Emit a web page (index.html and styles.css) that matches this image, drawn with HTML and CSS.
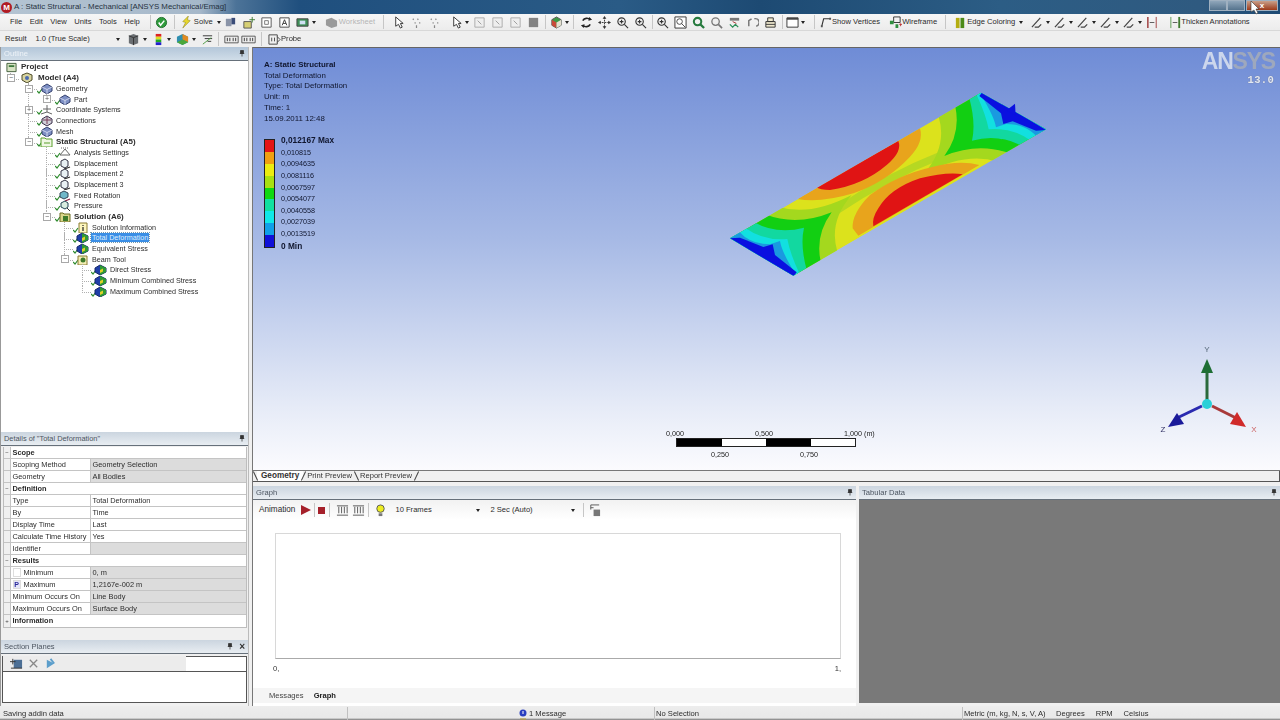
FILE: index.html
```html
<!DOCTYPE html>
<html lang="en">
<head>
<meta charset="utf-8">
<title>A : Static Structural - Mechanical [ANSYS Mechanical/Emag]</title>
<link rel="stylesheet" href="styles.css">
</head>
<body>
<svg class="sprite" xmlns="http://www.w3.org/2000/svg">
  <symbol id="chk" viewBox="0 0 16 11"><path d="M0 8l2 2 3-4" fill="none" stroke="#2e8b2e" stroke-width="1.2"/></symbol>
  <symbol id="cube" viewBox="0 0 16 11"><path d="M5 4l5-3 5 3v4l-5 3-5-3z" fill="#7d8fc4" stroke="#34406e"/><path d="M5 4l5 2.500 5-2.500M10 6.500V11" fill="none" stroke="#dfe4f5" stroke-width=".8"/></symbol>
  <symbol id="conn" viewBox="0 0 16 11"><path d="M5 4l5-3 5 3v4l-5 3-5-3z" fill="#cfcfd8" stroke="#3b2f4a"/><path d="M10 2v7M6 5h8" stroke="#7a3f5a"/></symbol>
  <symbol id="axes" viewBox="0 0 16 11"><path d="M10 1v7M10 8l-6 2M10 8l5 2M6 5h8" stroke="#666" fill="none"/></symbol>
  <symbol id="green" viewBox="0 0 16 11"><path d="M4 2h4l1 1h6v8H4z" fill="#f0f7e4" stroke="#5aa02c"/><path d="M7 7h6" stroke="#5aa02c"/></symbol>
  <symbol id="wire" viewBox="0 0 16 11"><path d="M5 8l5-6 5 6z" fill="#fff" stroke="#666"/><path d="M6 1h8" stroke="#666" stroke-dasharray="1 1"/></symbol>
  <symbol id="disp" viewBox="0 0 16 11"><path d="M6 3l4-2 3 2v5l-3 2-4-2z" fill="#e8f0f4" stroke="#334"/><path d="M9 11l6-2" stroke="#333" stroke-width="1.300"/></symbol>
  <symbol id="fixed" viewBox="0 0 16 11"><path d="M5 3l4-2 4 2v4l-4 2-4-2z" fill="#6fb7c8" stroke="#345"/><path d="M10 11l5-2" stroke="#8a2040" stroke-width="1.300"/></symbol>
  <symbol id="press" viewBox="0 0 16 11"><path d="M6 3l4-2 3 2v4l-3 2-4-2z" fill="#d8ece0" stroke="#245"/><path d="M12 8l3 3" stroke="#333"/></symbol>
  <symbol id="sol" viewBox="0 0 16 11"><path d="M5 2h3l1 1h6v8H5z" fill="#d9d68a" stroke="#6b6a20"/><path d="M8 5h5v5H8z" fill="#3e7a2a"/></symbol>
  <symbol id="info" viewBox="0 0 16 11"><path d="M6 1h8v10H6z" fill="#fdf6bd" stroke="#8a7a30"/><path d="M10 3v1M10 5v4" stroke="#222" stroke-width="1.200"/></symbol>
  <symbol id="beam" viewBox="0 0 16 11"><path d="M5 2h9v9H5z" fill="#f3eeb4" stroke="#8a7a30"/><circle cx="10" cy="6" r="2.500" fill="#3e7a2a"/></symbol>
  <symbol id="res" viewBox="0 0 16 11"><path d="M4 4l5-3 6 3v4l-6 3-5-3z" fill="#1f3fa8" stroke="#16286a"/><path d="M9 1l6 3v4l-6 3z" fill="#2f9a34"/><path d="M9 6l3-1.500v3L9 9z" fill="#e0d02a"/></symbol>
  <symbol id="proj" viewBox="0 0 12 11"><path d="M1 1h10v9H1z" fill="#d7e3c3" stroke="#3c5a34"/><path d="M3 3h6v2H3z" fill="#3c7a3c"/></symbol>
  <symbol id="model" viewBox="0 0 12 11"><path d="M1 3l5-2 5 2v5l-5 3-5-3z" fill="#d8d4a0" stroke="#4c4a28"/><circle cx="6" cy="6" r="2" fill="#4a6ab0"/></symbol>
  <symbol id="ok" viewBox="0 0 14 14"><circle cx="7" cy="7" r="5.500" fill="#2f9b3c" stroke="#1f6e2a"/><path d="M4 7l2 3 4-5" fill="none" stroke="#fff" stroke-width="1.600"/></symbol>
  <symbol id="bolt" viewBox="0 0 14 14"><path d="M9 0L3 6l3 1-3 6 8-8-3-1z" fill="#e7d72d" stroke="#8e8420" stroke-width=".6"/></symbol>
  <symbol id="boxes" viewBox="0 0 14 14"><path d="M2 3h6v8H2z" fill="#8a94a8"/><path d="M8 2h4v7H8z" fill="#3a4c78"/></symbol>
  <symbol id="starbox" viewBox="0 0 14 14"><path d="M2 6h8v7H2z" fill="#d6cf74" stroke="#555"/><path d="M11 1v6M8 4h6" stroke="#3a7a30"/></symbol>
  <symbol id="page" viewBox="0 0 14 14"><path d="M2 2h10v10H2z" fill="#fff" stroke="#555"/><path d="M5 5h4v4H5z" fill="none" stroke="#777"/></symbol>
  <symbol id="pagea" viewBox="0 0 14 14"><path d="M2 2h10v10H2z" fill="#fff" stroke="#444"/><path d="M4.500 10L7 4l2.500 6M5.500 8h3" fill="none" stroke="#333"/></symbol>
  <symbol id="globe" viewBox="0 0 14 14"><path d="M1 3h12v8H1z" fill="#3f8f57" stroke="#444"/><path d="M4 5h6v4H4z" fill="#cfe0f2"/></symbol>
  <symbol id="ws" viewBox="0 0 14 14"><path d="M1 4l6-2 6 3v6l-6 2-6-3z" fill="#9a9a9a"/></symbol>
  <symbol id="cursor" viewBox="0 0 14 14"><path d="M4 1v10l3-2 2 4 2-1-2-4h3z" fill="#fff" stroke="#333"/></symbol>
  <symbol id="pick" viewBox="0 0 14 14"><path d="M3 3l1 1M8 3l1 1M5 7l1 1M10 7l1 1M7 10v3" stroke="#888" stroke-width="1.300"/></symbol>
  <symbol id="fpage" viewBox="0 0 14 14"><path d="M2 2h10v10H2z" fill="#eee" stroke="#aaa"/><path d="M5 5l4 4" stroke="#999"/></symbol>
  <symbol id="gbox" viewBox="0 0 14 14"><path d="M2 2h10v10H2z" fill="#666" opacity=".8"/></symbol>
  <symbol id="gcube" viewBox="0 0 14 14"><path d="M2 4l5-3 5 3v6l-5 3-5-3z" fill="#3f9b46" stroke="#555"/><path d="M2 4l5 3v6l-5-3z" fill="#c94a3a"/><path d="M7 7l5-3v6l-5 3z" fill="#e5dfd0"/></symbol>
  <symbol id="rot" viewBox="0 0 14 14"><path d="M11 4A5 5 0 0 0 3 5M3 10a5 5 0 0 0 8-1" fill="none" stroke="#222" stroke-width="1.800"/><path d="M10 1l3 3-4 1zM4 13l-3-3 4-1z" fill="#222"/></symbol>
  <symbol id="pan" viewBox="0 0 14 14"><path d="M7 1v12M1 7h12" stroke="#333" stroke-dasharray="2 1"/><path d="M7 0l2 3H5zM7 14l2-3H5zM0 7l3-2v4zM14 7l-3-2v4z" fill="#333"/></symbol>
  <symbol id="zoom" viewBox="0 0 14 14"><circle cx="6" cy="6" r="4" fill="#f2f2f2" stroke="#333" stroke-width="1.200"/><path d="M9 9l4 4M4 6h4M6 4v4" stroke="#333" stroke-width="1.200"/></symbol>
  <symbol id="zoomb" viewBox="0 0 14 14"><path d="M1 1h12v12H1z" fill="#fff" stroke="#333"/><circle cx="6" cy="6" r="3" fill="none" stroke="#444"/><path d="M8 8l4 4" stroke="#444"/></symbol>
  <symbol id="zoomg" viewBox="0 0 14 14"><circle cx="6" cy="6" r="4" fill="none" stroke="#267a3e" stroke-width="2.200"/><path d="M9 9l4 4" stroke="#267a3e" stroke-width="2.400"/></symbol>
  <symbol id="zoomn" viewBox="0 0 14 14"><circle cx="6" cy="6" r="4" fill="#eee" stroke="#777" stroke-width="1.400"/><path d="M9 9l4 4" stroke="#777" stroke-width="1.800"/></symbol>
  <symbol id="three60" viewBox="0 0 14 14"><path d="M2 2h10v3H2z" fill="#444" opacity=".7"/><path d="M2 9l3 3 3-3 3 3" fill="none" stroke="#2f8f5a" stroke-width="1.400"/><path d="M5 6l4 2" stroke="#a33"/></symbol>
  <symbol id="hand" viewBox="0 0 14 14"><path d="M3 11V5l3-2M9 3a4 4 0 0 1 2 8" fill="none" stroke="#777" stroke-width="1.600"/></symbol>
  <symbol id="print" viewBox="0 0 14 14"><path d="M4 2h6v4H4zM2 6h10v6H2z" fill="#efe9cf" stroke="#333"/><path d="M2 9h10" stroke="#333"/></symbol>
  <symbol id="frame" viewBox="0 0 14 14"><path d="M1 2h12v10H1z" fill="#fff" stroke="#333"/><path d="M1 2h12v2H1z" fill="#444"/></symbol>
  <symbol id="vert" viewBox="0 0 14 14"><path d="M3 11l2-8h7" fill="none" stroke="#333" stroke-width="1.200"/><path d="M2 10h2v2H2zM11 2h2v2h-2z" fill="#555"/></symbol>
  <symbol id="wfr" viewBox="0 0 14 14"><path d="M5 1h7v6H5z" fill="none" stroke="#333"/><path d="M1 5h4v4H1zM7 9h3v4H7z" fill="#2f8f3f"/><path d="M11 9h3M12.500 8v3" stroke="#b33"/></symbol>
  <symbol id="bars" viewBox="0 0 14 14"><path d="M2 2h4v11H2z" fill="#b4ad10"/><path d="M7 2h4v11H7z" fill="#4b8a18"/></symbol>
  <symbol id="edge" viewBox="0 0 14 14"><path d="M1 12L10 2M4 12h4l3-3" fill="none" stroke="#444" stroke-width="1.300"/></symbol>
  <symbol id="thinl" viewBox="0 0 14 14"><path d="M2 1v12" stroke="#a04040" stroke-width="1.600"/><path d="M11 1v12" stroke="#a04040"/><path d="M4 7h5" stroke="#555"/></symbol>
  <symbol id="thinr" viewBox="0 0 14 14"><path d="M2 1v12" stroke="#5a9a50"/><path d="M11 1v12" stroke="#3f7a30" stroke-width="2"/><path d="M4 7h5" stroke="#555"/></symbol>
  <symbol id="cube3" viewBox="0 0 14 14"><path d="M2 3l5-2 5 2v8l-5 2-5-2z" fill="#6a6e72"/><path d="M7 5v8" stroke="#333"/><path d="M2 3l5 2 5-2" fill="none" stroke="#333"/></symbol>
  <symbol id="rain" viewBox="0 0 14 14"><path d="M4 1h6v3H4z" fill="#d22"/><path d="M4 4h6v3H4z" fill="#dd2"/><path d="M4 7h6v3H4z" fill="#2a2"/><path d="M4 10h6v3H4z" fill="#22c"/></symbol>
  <symbol id="ball" viewBox="0 0 14 14"><path d="M1 4l6-3 6 3v6l-6 3-6-3z" fill="#2f8fb0"/><path d="M7 1l6 3v6L7 7z" fill="#e08a20"/><path d="M1 10l6-3 6 3-6 3z" fill="#4aa83a"/></symbol>
  <symbol id="filter" viewBox="0 0 14 14"><path d="M2 3h10M4 6h8M7 9h4" stroke="#333"/><path d="M2 12L11 5" stroke="#4a9a40"/></symbol>
  <symbol id="pill" viewBox="0 0 18 14"><path d="M1 3h16v8H1z" fill="#eee" stroke="#444"/><path d="M4 5v4M7 5v4M11 5v4M14 5v4" stroke="#222"/></symbol>
  <symbol id="probe" viewBox="0 0 14 14"><path d="M1 2h9v10H1z" fill="none" stroke="#444"/><path d="M4 5v4M7 5v4" stroke="#444"/><path d="M10 4l3 3-3 3" fill="none" stroke="#444"/></symbol>
  <symbol id="pin" viewBox="0 0 8 8"><path d="M2 0h4v4H2zM1 4h6M4 4v4" fill="#333" stroke="#333"/></symbol>
  <symbol id="bulb" viewBox="0 0 12 14"><circle cx="6" cy="5" r="4" fill="#eded20" stroke="#555"/><path d="M4 10h4v3H4z" fill="#777"/></symbol>
  <symbol id="frames" viewBox="0 0 14 14"><path d="M3 3v7M6 3v7M9 3v7M12 3v7" stroke="#555"/><path d="M1 12h12M1 2h12" stroke="#555"/></symbol>
  <symbol id="exportg" viewBox="0 0 14 14"><path d="M3 1h9M3 1v5M3 4h3" stroke="#555" fill="none"/><path d="M6 6h7v7H6z" fill="#777"/></symbol>
  <symbol id="newp" viewBox="0 0 14 14"><path d="M4 3h9v9H4z" fill="#4c6f95"/><path d="M0 5h6M3 2v6M1 12h12" stroke="#333"/></symbol>
  <symbol id="cross" viewBox="0 0 14 14"><path d="M3 3l8 8M11 3l-8 8" stroke="#888" stroke-width="1.400"/></symbol>
  <symbol id="del" viewBox="0 0 14 14"><path d="M3 3l8 4-8 5z" fill="#5c9ecb"/><path d="M7 2l4 5" stroke="#5c9ecb" stroke-width="2"/></symbol>
</svg>

<div class="app">
  <header class="titlebar">
    <span class="logo">M</span>
    <span class="title">A : Static Structural - Mechanical [ANSYS Mechanical/Emag]</span>
    <span class="winbtns"><span class="wb"></span><span class="wb"></span><span class="wb close">x</span></span>
    <svg class="pointer" viewBox="0 0 10 14"><path d="M1 0v11l3-2 2 4 2-1-2-4h3z" fill="#fff" stroke="#333" stroke-width=".6"/></svg>
  </header>

  <div class="tb tb1">
    <nav class="menu"><span>File</span><span>Edit</span><span>View</span><span>Units</span><span>Tools</span><span>Help</span></nav>
    <i class="sep s1"></i>
    <span class="c16"><svg class="ic"><use href="#ok"/></svg></span>
    <i class="sep s2"></i>
    <span class="c14"><svg class="ic"><use href="#bolt"/></svg></span><span class="lbl">Solve</span>
    <b class="dd d1"></b>
    <span class="c18 after-dd"><svg class="ic"><use href="#boxes"/></svg></span>
    <span class="c18"><svg class="ic"><use href="#starbox"/></svg></span>
    <span class="c18"><svg class="ic"><use href="#page"/></svg></span>
    <span class="c18"><svg class="ic"><use href="#pagea"/></svg></span>
    <span class="c18"><svg class="ic"><use href="#globe"/></svg></span><b class="dd d0"></b>
    <span class="c14 ws"><svg class="ic"><use href="#ws"/></svg></span><span class="lbl dim">Worksheet</span>
    <i class="sep s3"></i>
    <span class="c18"><svg class="ic"><use href="#cursor"/></svg></span>
    <span class="c18"><svg class="ic"><use href="#pick"/></svg></span>
    <span class="c18"><svg class="ic"><use href="#pick"/></svg></span>
    <span class="c18 m2"><svg class="ic"><use href="#cursor"/></svg></span><b class="dd d0"></b>
    <span class="c18 m0"><svg class="ic"><use href="#fpage"/></svg></span>
    <span class="c18"><svg class="ic"><use href="#fpage"/></svg></span>
    <span class="c18"><svg class="ic"><use href="#fpage"/></svg></span>
    <span class="c18"><svg class="ic"><use href="#gbox"/></svg></span>
    <i class="sep s4"></i>
    <span class="c18"><svg class="ic"><use href="#gcube"/></svg></span><b class="dd d0"></b>
    <i class="sep s5"></i>
    <span class="c18"><svg class="ic"><use href="#rot"/></svg></span>
    <span class="c18"><svg class="ic"><use href="#pan"/></svg></span>
    <span class="c18"><svg class="ic"><use href="#zoom"/></svg></span>
    <span class="c18"><svg class="ic"><use href="#zoom"/></svg></span>
    <i class="sep s6"></i>
    <span class="c18"><svg class="ic"><use href="#zoom"/></svg></span>
    <span class="c18"><svg class="ic"><use href="#zoomb"/></svg></span>
    <span class="c18"><svg class="ic"><use href="#zoomg"/></svg></span>
    <span class="c18"><svg class="ic"><use href="#zoomn"/></svg></span>
    <span class="c18"><svg class="ic"><use href="#three60"/></svg></span>
    <span class="c18"><svg class="ic"><use href="#hand"/></svg></span>
    <span class="c18"><svg class="ic"><use href="#print"/></svg></span>
    <i class="sep s7"></i>
    <span class="c18"><svg class="ic"><use href="#frame"/></svg></span><b class="dd d0"></b>
    <i class="sep s8"></i>
    <span class="c14"><svg class="ic"><use href="#vert"/></svg></span><span class="lbl">Show Vertices</span>
    <span class="c14 m7"><svg class="ic"><use href="#wfr"/></svg></span><span class="lbl">Wireframe</span>
    <i class="sep s9"></i>
    <span class="c14"><svg class="ic"><use href="#bars"/></svg></span><span class="lbl">Edge Coloring</span><b class="dd d1"></b>
    <span class="c18 e1"><svg class="ic"><use href="#edge"/></svg></span><b class="dd d0"></b>
    <span class="c18 e2"><svg class="ic"><use href="#edge"/></svg></span><b class="dd d0"></b>
    <span class="c18 e2"><svg class="ic"><use href="#edge"/></svg></span><b class="dd d0"></b>
    <span class="c18 e2"><svg class="ic"><use href="#edge"/></svg></span><b class="dd d0"></b>
    <span class="c18 e2"><svg class="ic"><use href="#edge"/></svg></span><b class="dd d0"></b>
    <span class="c18 e3"><svg class="ic"><use href="#thinl"/></svg></span>
    <span class="c18 e4"><svg class="ic"><use href="#thinr"/></svg></span><span class="lbl thick">Thicken Annotations</span>
  </div>

  <div class="tb tb2">
    <span class="lbl res">Result</span>
    <span class="scale">1.0 (True Scale)</span><b class="dd d1"></b>
    <span class="c18 sc"><svg class="ic"><use href="#cube3"/></svg></span><b class="dd d0"></b>
    <span class="c18 sc2"><svg class="ic"><use href="#rain"/></svg></span><b class="dd d0"></b>
    <span class="c18 sc2"><svg class="ic"><use href="#ball"/></svg></span><b class="dd d0"></b>
    <span class="c18 sc2"><svg class="ic"><use href="#filter"/></svg></span>
    <i class="sep s10"></i>
    <svg class="ic pl"><use href="#pill"/></svg><svg class="ic pl"><use href="#pill"/></svg>
    <i class="sep s11"></i>
    <span class="c14"><svg class="ic"><use href="#probe"/></svg></span><span class="lbl">Probe</span>
  </div>

  <main class="main">
    <aside class="left">
      <section class="outline">
        <div class="phead faint">Outline<svg class="pin"><use href="#pin"/></svg></div>
        <ul class="tree">
          <li class="root"><div class="row"><svg class="ti small"><use href="#proj"/></svg><span class="bold">Project</span></div>
            <ul>
              <li><div class="row"><span class="exp">&minus;</span><svg class="ti"><use href="#model"/></svg><span class="bold">Model (A4)</span></div>
                <ul>
                  <li><div class="row"><span class="exp">&minus;</span><svg class="ti"><use href="#chk"/><use href="#cube"/></svg><span>Geometry</span></div>
                    <ul><li><div class="row"><span class="exp">+</span><svg class="ti"><use href="#chk"/><use href="#cube"/></svg><span>Part</span></div></li></ul>
                  </li>
                  <li><div class="row"><span class="exp">+</span><svg class="ti"><use href="#chk"/><use href="#axes"/></svg><span>Coordinate Systems</span></div></li>
                  <li><div class="row"><svg class="ti"><use href="#chk"/><use href="#conn"/></svg><span>Connections</span></div></li>
                  <li><div class="row"><svg class="ti"><use href="#chk"/><use href="#cube"/></svg><span>Mesh</span></div></li>
                  <li><div class="row"><span class="exp">&minus;</span><svg class="ti"><use href="#chk"/><use href="#green"/></svg><span class="bold">Static Structural (A5)</span></div>
                    <ul>
                      <li><div class="row"><svg class="ti"><use href="#chk"/><use href="#wire"/></svg><span>Analysis Settings</span></div></li>
                      <li><div class="row"><svg class="ti"><use href="#chk"/><use href="#disp"/></svg><span>Displacement</span></div></li>
                      <li><div class="row"><svg class="ti"><use href="#chk"/><use href="#disp"/></svg><span>Displacement 2</span></div></li>
                      <li><div class="row"><svg class="ti"><use href="#chk"/><use href="#disp"/></svg><span>Displacement 3</span></div></li>
                      <li><div class="row"><svg class="ti"><use href="#chk"/><use href="#fixed"/></svg><span>Fixed Rotation</span></div></li>
                      <li><div class="row"><svg class="ti"><use href="#chk"/><use href="#press"/></svg><span>Pressure</span></div></li>
                      <li><div class="row"><span class="exp">&minus;</span><svg class="ti"><use href="#chk"/><use href="#sol"/></svg><span class="bold">Solution (A6)</span></div>
                        <ul>
                          <li><div class="row"><svg class="ti"><use href="#chk"/><use href="#info"/></svg><span>Solution Information</span></div></li>
                          <li><div class="row"><svg class="ti"><use href="#chk"/><use href="#res"/></svg><span class="sel">Total Deformation</span></div></li>
                          <li><div class="row"><svg class="ti"><use href="#chk"/><use href="#res"/></svg><span>Equivalent Stress</span></div></li>
                          <li><div class="row"><span class="exp">&minus;</span><svg class="ti"><use href="#chk"/><use href="#beam"/></svg><span>Beam Tool</span></div>
                            <ul>
                              <li><div class="row"><svg class="ti"><use href="#chk"/><use href="#res"/></svg><span>Direct Stress</span></div></li>
                              <li><div class="row"><svg class="ti"><use href="#chk"/><use href="#res"/></svg><span>Minimum Combined Stress</span></div></li>
                              <li><div class="row"><svg class="ti"><use href="#chk"/><use href="#res"/></svg><span>Maximum Combined Stress</span></div></li>
                            </ul>
                          </li>
                        </ul>
                      </li>
                    </ul>
                  </li>
                </ul>
              </li>
            </ul>
          </li>
        </ul>
      </section>

      <section class="details">
        <div class="phead">Details of "Total Deformation"<svg class="pin"><use href="#pin"/></svg></div>
        <div class="grid">
          <div class="pr sec"><span class="gut"><span class="exp2">&minus;</span></span><span class="nm">Scope</span></div>
          <div class="pr"><span class="gut"></span><span class="nm">Scoping Method</span><span class="vl gray">Geometry Selection</span></div>
          <div class="pr"><span class="gut"></span><span class="nm">Geometry</span><span class="vl gray">All Bodies</span></div>
          <div class="pr sec"><span class="gut"><span class="exp2">&minus;</span></span><span class="nm">Definition</span></div>
          <div class="pr"><span class="gut"></span><span class="nm">Type</span><span class="vl">Total Deformation</span></div>
          <div class="pr"><span class="gut"></span><span class="nm">By</span><span class="vl">Time</span></div>
          <div class="pr"><span class="gut"></span><span class="nm">Display Time</span><span class="vl">Last</span></div>
          <div class="pr"><span class="gut"></span><span class="nm">Calculate Time History</span><span class="vl">Yes</span></div>
          <div class="pr"><span class="gut"></span><span class="nm">Identifier</span><span class="vl gray"></span></div>
          <div class="pr sec"><span class="gut"><span class="exp2">&minus;</span></span><span class="nm">Results</span></div>
          <div class="pr"><span class="gut"></span><span class="nm chkd"><i class="cb"></i>Minimum</span><span class="vl gray">0, m</span></div>
          <div class="pr"><span class="gut"></span><span class="nm chkd"><i class="cb p">P</i>Maximum</span><span class="vl gray">1,2167e-002 m</span></div>
          <div class="pr"><span class="gut"></span><span class="nm">Minimum Occurs On</span><span class="vl gray">Line Body</span></div>
          <div class="pr"><span class="gut"></span><span class="nm">Maximum Occurs On</span><span class="vl gray">Surface Body</span></div>
          <div class="pr sec"><span class="gut"><span class="exp2">+</span></span><span class="nm">Information</span></div>
        </div>
      </section>

      <section class="planes">
        <div class="phead">Section Planes<svg class="pin"><use href="#pin"/></svg><span class="x">&times;</span></div>
        <div class="pbox">
          <div class="ptools">
            <svg class="ic"><use href="#newp"/></svg><svg class="ic"><use href="#cross"/></svg><svg class="ic"><use href="#del"/></svg>
          </div>
        </div>
      </section>
    </aside>

    <div class="right">
      <section class="viewport">
        <div class="vinfo">
          <div class="bold">A: Static Structural</div>
          <div>Total Deformation</div>
          <div>Type: Total Deformation</div>
          <div>Unit: m</div>
          <div>Time: 1</div>
          <div>15.09.2011 12:48</div>
        </div>
        <div class="legend">
          <div class="swatches"><i class="c1"></i><i class="c2"></i><i class="c3"></i><i class="c4"></i><i class="c5"></i><i class="c6"></i><i class="c7"></i><i class="c8"></i><i class="c9"></i></div>
          <div class="lvals">
            <span class="bold">0,012167 Max</span><span>0,010815</span><span>0,0094635</span><span>0,0081116</span><span>0,0067597</span><span>0,0054077</span><span>0,0040558</span><span>0,0027039</span><span>0,0013519</span><span class="bold">0 Min</span>
          </div>
        </div>
        <div class="brand"><span class="an">AN</span><span class="sys">SYS</span><small>13.0</small></div>

        <svg class="plate" viewBox="0 0 1020 585">
          <defs>
            <clipPath id="pl"><path d="M30 460L220 572 978 133 783 23z"/></clipPath>
            <g id="endb">
              <path fill="#a4d81e" d="M175 365Q270 395 395 330Q325 410 352 500L220 585 15 460z"/>
              <path fill="#12cf12" d="M135 388Q230 425 335 382Q285 450 302 530L220 585 15 460z"/>
              <path fill="#12d8a0" d="M100 410Q170 450 252 428Q240 480 260 555L220 585 15 460z"/>
              <path fill="#12e0e0" d="M75 428Q130 468 202 462Q210 505 238 565L220 585 15 460z"/>
              <path fill="#1a9ae0" d="M58 440Q90 478 150 478L180 468Q185 500 225 565L220 585 15 460z"/>
              <path fill="#0a10e0" d="M30 460L60 458 130 486 158 478 165 510 230 562 220 575z"/>
            </g>
          </defs>
          <g clip-path="url(#pl)">
            <path d="M30 460L220 572 978 133 783 23z" fill="#dce21c"/>
            <path d="M345 380Q500 275 665 210" stroke="#b6d822" stroke-width="22" fill="none"/>
            <use href="#endb"/>
            <use href="#endb" transform="rotate(180 504 297.500)"/>
            <path fill="#e8a41c" d="M232 342L600 130Q612 172 570 215Q500 290 400 325Q300 355 232 342z"/>
            <path fill="#e8a41c" d="M415 452L778 240Q720 225 640 245Q530 270 450 330Q395 385 398 430z"/>
            <path fill="#e01414" d="M288 306L535 168Q548 200 500 240Q430 300 330 315Q300 315 288 306z"/>
            <path fill="#e01414" d="M460 424L728 268Q680 260 600 280Q510 310 475 370Q455 400 460 424z"/>
          </g>
          <path d="M860 76L885 56 887 92z" fill="#0a10e0"/>
        </svg>

        <svg class="triad" viewBox="0 0 130 110">
          <path d="M57 64V28" stroke="#2a6a3c" stroke-width="3"/>
          <path d="M57 19l6 14H51z" fill="#1e6e34"/>
          <path d="M52 66L27 78" stroke="#2a2ab0" stroke-width="3"/>
          <path d="M18 87l9-14 7 11z" fill="#1a1a9a"/>
          <path d="M62 66l24 12" stroke="#a83a3a" stroke-width="3"/>
          <path d="M96 87L80 84l7-12z" fill="#d02a2a"/>
          <circle cx="57" cy="64" r="5" fill="#2ad0d8"/>
          <text x="57" y="12" class="axl">Y</text><text x="13" y="92" class="axl blue">Z</text><text x="104" y="92" class="axl red">X</text>
        </svg>

        <div class="scalebar">
          <div class="sc-top"><span>0,000</span><span>0,500</span><span>1,000 (m)</span></div>
          <div class="sc-bar"><i></i><i></i><i></i><i></i></div>
          <div class="sc-bot"><span>0,250</span><span>0,750</span></div>
        </div>
      </section>

      <div class="tabs">
        <span class="tab on">Geometry</span><span class="tab">Print Preview</span><span class="tab">Report Preview</span>
      </div>

      <div class="lower">
        <section class="graph">
          <div class="phead">Graph<svg class="pin"><use href="#pin"/></svg></div>
          <div class="anim">
            <span class="lbl">Animation</span>
            <span class="play"></span><i class="sep s12"></i><span class="stop"></span><i class="sep s13"></i>
            <svg class="ic"><use href="#frames"/></svg><svg class="ic g2"><use href="#frames"/></svg>
            <i class="sep s14"></i>
            <svg class="ic"><use href="#bulb"/></svg>
            <span class="sel1">10 Frames</span><b class="dd d1"></b>
            <span class="sel2">2 Sec (Auto)</span><b class="dd d1"></b>
            <i class="sep s15"></i>
            <svg class="ic"><use href="#exportg"/></svg>
          </div>
          <div class="plot">
            <div class="plotbox"></div>
            <div class="axis"><span>0,</span><span>1,</span></div>
          </div>
          <div class="gtabs"><span class="gtab">Messages</span><span class="gtab on">Graph</span></div>
        </section>
        <section class="tabular">
          <div class="phead">Tabular Data<svg class="pin"><use href="#pin"/></svg></div>
          <div class="tbody"></div>
        </section>
      </div>
    </div>
  </main>

  <footer class="status">
    <span class="st a">Saving addin data</span>
    <span class="st b"></span>
    <span class="st c"><svg class="msg" viewBox="0 0 8 12"><circle cx="4" cy="5" r="3.500" fill="#2a3fc0"/><path d="M4 3v3" stroke="#fff"/><path d="M1 11h6" stroke="#b9a030"/></svg>1 Message</span>
    <span class="st d">No Selection</span>
    <span class="st e">Metric (m, kg, N, s, V, A)</span>
    <span class="st f">Degrees</span><span class="st f">RPM</span><span class="st f">Celsius</span>
  </footer>
</div>
</body>
</html>
```

FILE: styles.css
```css
* { box-sizing: border-box; }
html, body { margin: 0; height: 100%; overflow: hidden; }
body { font: 7.6px/1 "Liberation Sans", Arial, sans-serif; color: #2c2c2c; background: #f0f0f0; }
.sprite { display: none; }
.app { width: 1280px; height: 720px; display: grid; grid-template-rows: 14px 17px 16px 659px 14px; filter: blur(.3px); }

/* title bar */
.titlebar { display: flex; align-items: center; position: relative; padding-left: 1px; font-size: 8px; color: #26323f;
  background: linear-gradient(90deg, #b4c4d2 0, #a6b8ca 200px, #4c7398 236px, #1f4f7e 300px, #2a5b86 620px, #1d4a73 760px, #2c5d85 1000px, #2f5a80 1200px, #1d4a73 100%); }
.logo { width: 11px; height: 11px; border-radius: 50%; background: #b01c24; color: #fff; font: bold 8px/11px "Liberation Sans", sans-serif; text-align: center; margin-right: 2px; }
.title { white-space: nowrap; font-size: 7.900px; }
.winbtns { margin-left: auto; display: flex; height: 11px; margin-top: -3px; }
.wb { width: 18px; border: 1px solid #9fb0c0; background: linear-gradient(#8fa6ba, #55738d); }
.wb.close { width: 32px; margin-left: 1px; margin-right: 2px; background: linear-gradient(#c9a08a, #9c3a1a); color: #fff; text-align: center; font: bold 8px/9px "Liberation Sans", sans-serif; }
.pointer { position: absolute; left: 1250px; top: 1px; width: 10px; height: 14px; }

/* toolbars */
.tb { display: flex; align-items: center; white-space: nowrap; }
.tb1 { background: linear-gradient(#f6f6f6, #ececec); border-bottom: 1px solid #d8d8d8; }
.tb2 { background: #efefef; }
.menu { display: flex; gap: 7.500px; padding-left: 10px; }
.ic { width: 13px; height: 13px; display: block; flex: none; }
.c14, .c16, .c18 { display: flex; justify-content: center; flex: none; }
.c14 { width: 14px; }
.c16 { width: 16px; }
.c18 { width: 18px; }
.sep { width: 1px; height: 14px; background: #c6c6c6; flex: none; display: block; }
.s1 { margin: 0 3px 0 10px; }
.s2 { margin: 0 5px 0 4px; }
.s3 { margin: 0 5px 0 8px; }
.s4 { margin: 0 1px 0 3px; }
.s5 { margin: 0 3px 0 4px; }
.s6 { margin: 0 0 0 3px; }
.s7 { margin: 0 0 0 3px; }
.s8 { margin: 0 3px 0 9px; }
.s9 { margin: 0 7px 0 8px; }
.s10 { margin: 0 5px 0 2px; }
.s11 { margin: 0 5px 0 3px; }
.dd { width: 0; height: 0; border: 2.500px solid transparent; border-top: 3px solid #222; border-bottom: 0; flex: none; display: block; }
.d0 { margin-left: 0; }
.d1 { margin: 0 3px 0 4px; }
.lbl { flex: none; }
.dim { color: #b5b5b5; }
.ws { margin-left: 9px; }
.after-dd { margin-left: -2px; }
.m2 { margin-left: 4px; }
.m0 { margin-left: 1px; }
.m7 { margin-left: 8px; }
.e1 { margin-left: 2px; }
.e2 { margin-left: 1px; }
.e3 { margin-left: 1px; }
.e4 { margin-left: 5px; }
.thick { margin-left: -3px; }
.res { margin-left: 5px; }
.scale { width: 80px; margin-left: 9px; }
.tb2 .d1 { margin: 0; }
.sc { margin-left: 5px; }
.sc2 { margin-left: 2.500px; }
.pl { width: 15px; margin-right: 2px; }

/* main */
.main { display: grid; grid-template-columns: 252px 1fr; min-height: 0; }
.left { display: flex; flex-direction: column; border-right: 1px solid #bbb; background: #f0f0f0; margin-right: 3px; }
.right { display: flex; flex-direction: column; border-left: 1px solid #777; min-width: 0; min-height: 0; }
.phead { height: 14px; display: flex; align-items: center; padding: 0 3px; color: #4c5560; background: linear-gradient(#cbd5df, #e8edf2); border-bottom: 1px solid #66707a; flex: none; }
.phead .pin { width: 6px; height: 7px; margin-left: auto; }
.faint { color: #eef3f8; background: linear-gradient(#b3c6d9, #d0dde8); }
.outline { height: 385px; background: #fff; border-left: 1px solid #999; display: flex; flex-direction: column; flex: none; }

/* tree */
.tree, .tree ul { list-style: none; margin: 0; padding: 0; }
.tree { padding-top: 1px; font-size: 7.200px; }
.tree > li > ul { margin-left: 9px; }
.tree li li { border-left: 1px dotted #b0b0b0; }
.tree li li:last-child { border-left-color: transparent; }
.tree li li ul { margin-left: 17px; }
.row { display: flex; align-items: center; height: 10.670px; position: relative; white-space: nowrap; }
.tree > li > .row { padding-left: 5px; }
.tree li li > .row::before { content: ""; width: 8px; height: 6px; border-left: 1px dotted #b0b0b0; border-bottom: 1px dotted #b0b0b0; margin-left: -1px; align-self: flex-start; flex: none; }
.ti { width: 16px; height: 11px; margin-right: 3px; flex: none; }
.ti.small { width: 11px; margin-right: 4px; }
.bold { font-weight: bold; }
.tree .bold { font-size: 8px; }
.exp { position: absolute; left: -4px; top: 1.500px; width: 8px; height: 8px; border: 1px solid #a8a8a8; background: #fff; font: 7px/6px "Liberation Sans", sans-serif; text-align: center; z-index: 1; color: #555; }
.sel { background: #3a8ee6; color: #dfefff; padding: 1px; margin-left: -1px; outline: 1px dotted #79a; }

/* details */
.details { flex: none; display: flex; flex-direction: column; height: 208px; border-left: 1px solid #999; font-size: 7.400px; }
.grid { background: #fff; margin: 1px 1px 0 2px; border: 1px solid #bdbdbd; border-top: 0; }
.pr { display: grid; grid-template-columns: 7px 80px 1fr; height: 12px; border-bottom: 1px solid #c4c4c4; }
.pr:last-child { border-bottom: 0; }
.gut { background: #f0f0f0; border-right: 1px solid #c4c4c4; display: flex; align-items: center; justify-content: center; }
.exp2 { width: 5px; height: 5px; font: 6px/5px "Liberation Sans", sans-serif; text-align: center; color: #444; }
.nm { display: flex; align-items: center; padding-left: 1.500px; border-right: 1px solid #c4c4c4; white-space: nowrap; }
.vl { display: flex; align-items: center; padding-left: 1.500px; }
.gray { background: #dcdcdc; }
.sec .nm { font-weight: bold; border-right: 0; grid-column: 2 / 4; }
.cb { width: 8px; height: 9px; margin-right: 3px; border: 1px solid #ddd; font: bold 7px/8px "Liberation Sans", sans-serif; color: #2a2a9a; text-align: center; display: block; }
.chkd .cb { margin-left: 0; }
.cb.p { background: #e4e4f8; }

/* section planes */
.planes { flex: 1; display: flex; flex-direction: column; border-left: 1px solid #999; padding-bottom: 3px; min-height: 0; }
.pbox { flex: 1; margin: 2px 1px 0 1px; background: #fff; border: 1px solid #555; position: relative; }
.ptools { height: 15px; width: 183px; margin-top: -1px; margin-left: 0; background: #ececec; display: flex; gap: 4px; align-items: center; padding-left: 7px; border-bottom: 0; }
.pbox::after { content: ""; display: block; border-top: 1px solid #555; }
.x { margin-left: 6px; font-size: 10px; font-weight: bold; color: #333; }

/* viewport */
.viewport { flex: 1; min-height: 0; position: relative; overflow: hidden; border-top: 1px solid #666; border-bottom: 1px solid #777; background: linear-gradient(#6f8cd6 0, #a6b9e5 45%, #e6ebf7 85%, #fbfbfe 100%); }
.vinfo { position: absolute; left: 11px; top: 12px; line-height: 10.700px; color: #10162e; font-size: 7.900px; }
.legend { position: absolute; left: 11px; top: 91px; display: flex; gap: 6px; color: #10162e; font-size: 7.200px; }
.legend .bold { font-size: 8.300px; }
.swatches { width: 11px; border: 1px solid #222; height: 109px; display: flex; flex-direction: column; }
.swatches i { flex: 1; display: block; }
.c1 { background: #e41414; } .c2 { background: #f0a010; } .c3 { background: #ecec10; }
.c4 { background: #a8e010; } .c5 { background: #10d810; } .c6 { background: #10e0a0; }
.c7 { background: #10e8e8; } .c8 { background: #10a0e8; } .c9 { background: #1010d8; }
.lvals { display: flex; flex-direction: column; height: 114px; justify-content: space-between; margin-top: -3px; white-space: nowrap; }
.brand { position: absolute; right: 5px; top: 2px; font: bold 23px/23px "Liberation Sans", sans-serif; letter-spacing: -1.200px; color: #ccd6ec; text-align: right; }
.sys { color: #9ea8bd; }
.brand small { display: block; font: bold 10.500px/10px "Liberation Mono", monospace; letter-spacing: 0.300px; color: #e3e9f4; text-shadow: 0 0 1px #667; margin-top: 2px; margin-right: 1px; }
.plate { position: absolute; left: 467px; top: 37px; width: 340px; height: 195px; filter: blur(.4px); }
.triad { position: absolute; left: 897px; top: 292px; width: 130px; height: 110px; filter: blur(.3px); }
.axl { font: 8px "Liberation Sans", sans-serif; fill: #567; text-anchor: middle; }
.blue { fill: #336; }
.red { fill: #c66; }
.scalebar { position: absolute; left: 413px; top: 382px; width: 240px; color: #222; font-size: 7.200px; }
.sc-top { position: relative; height: 8px; display: flex; gap: 71px; }
.sc-bar { display: flex; width: 180px; height: 9px; border: 1px solid #222; margin-left: 10px; }
.sc-bar i { flex: 1; display: block; background: #fff; }
.sc-bar i:nth-child(odd) { background: #000; }
.sc-bot { display: flex; gap: 71px; padding-left: 45px; margin-top: 4px; }

/* tabs */
.tabs { flex: none; height: 11px; display: flex; padding-left: 4px; background: #f0f0f0; border-bottom: 1px solid #555; border-right: 1px solid #555; color: #333; position: relative; }
.tab { padding: 0 4px; line-height: 10px; position: relative; margin-right: 0; }
.tab.on { font-weight: bold; background: #fff; font-size: 8.200px; }
.tab::after { content: ""; position: absolute; right: -1px; top: 0; width: 1px; height: 10px; background: #444; transform: rotate(25deg); }
.tab:nth-child(2)::after { transform: rotate(-25deg); }
.tab.on::before { content: ""; position: absolute; left: -2px; top: 0; width: 1px; height: 10px; background: #444; transform: rotate(-25deg); }

/* lower */
.lower { flex: none; height: 224px; display: grid; grid-template-columns: 603px 1fr; gap: 3px; padding-top: 4px; min-height: 0; background: #f0f0f0; }
.graph { display: flex; flex-direction: column; background: #fff; min-width: 0; min-height: 0; }
.anim { flex: none; height: 20px; padding-left: 6px; display: flex; align-items: center; background: linear-gradient(#f2f2f2, #fff); }
.anim .lbl { margin-right: 6px; font-size: 8.200px; }
.play { width: 0; height: 0; border-left: 10px solid #a5202a; border-top: 5px solid transparent; border-bottom: 5px solid transparent; }
.stop { width: 7px; height: 7px; background: #a5202a; }
.s12 { margin: 0 3px 0 3px; }
.s13 { margin: 0 6px 0 4px; }
.g2 { margin-left: 3px; }
.s14 { margin: 0 5px 0 3px; }
.sel1 { width: 78px; margin-left: 8px; }
.sel2 { width: 78px; margin-left: 3px; padding-left: 0; }
.s15 { margin: 0 4px 0 1px; }
.anim .d1 { margin: 0 7px 0 3px; }
.plot { flex: 1; padding: 13px 15px 0 20px; display: flex; flex-direction: column; }
.plotbox { height: 126px; margin-left: 2px; margin-right: 0; border: 1px solid #d8d8d8; border-bottom-color: #aaa; background: #fff; }
.axis { display: flex; justify-content: space-between; margin-top: 6px; color: #333; }
.gtabs { flex: none; height: 15px; margin-bottom: 3px; display: flex; padding-left: 14px; gap: 6px; background: #f5f5f5; align-items: center; }
.gtab { padding: 0 2px; color: #444; }
.gtab.on { font-weight: bold; color: #222; }
.tabular { display: flex; flex-direction: column; padding-bottom: 3px; min-height: 0; }
.tbody { flex: 1; background: #797979; }

/* status */
.status { display: flex; align-items: center; background: linear-gradient(#ededed 0, #e8e8e8 85%, #777 100%); white-space: nowrap; padding-top: 1px; }
.st { height: 100%; display: flex; align-items: center; border-left: 1px solid #c0c0c0; padding-left: 1px; }
.st.a { width: 347px; border-left: 0; padding-left: 3px; }
.st.b { width: 171px; }
.st.c { width: 136px; border-left: 0; }
.st.d { width: 308px; }
.st.e { width: 94px; }
.st.f { border-left: 0; padding: 0 5px 0 0; margin-right: 6px; }
.msg { width: 8px; height: 12px; margin-right: 2px; }
```
